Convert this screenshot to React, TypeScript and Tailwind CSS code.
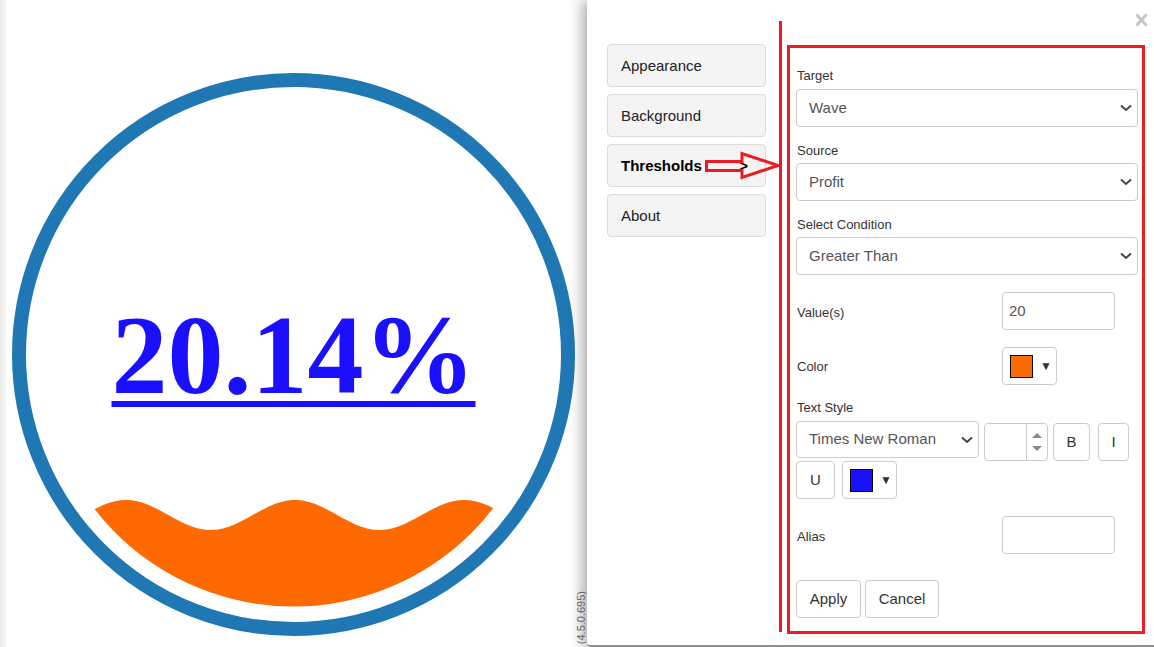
import React from 'react';

const RED = '#ed1c24';

const wavePath = (() => {
  let d = '';
  for (let x = -10; x <= 574; x += 2) {
    const y = 442 - 15 * Math.cos((2 * Math.PI * (x - 283)) / 169);
    d += `${x === -10 ? 'M' : 'L'} ${x} ${y.toFixed(2)} `;
  }
  return d + 'L 574 600 L -10 600 Z';
})();

const Gauge = () => (
  <svg width="563" height="563" viewBox="0 0 563 563" className="ml-[6px] mt-[73px] block">
    <defs>
      <clipPath id="inner">
        <circle cx="281.5" cy="281.5" r="252" />
      </clipPath>
    </defs>
    <circle cx="281.5" cy="281.5" r="274.5" fill="#fff" stroke="#1f77b4" strokeWidth="14" />
    <path d={wavePath} fill="#ff6a00" clipPath="url(#inner)" />
    <text
      x="281.5"
      y="320"
      textAnchor="middle"
      fontFamily="'Liberation Serif', 'Times New Roman', serif"
      fontWeight="bold"
      fontSize="112"
      fill="#1a10ff"
    >
      20.14%
    </text>
    <rect x="99.5" y="328" width="364" height="6" fill="#1a10ff" />
  </svg>
);

const Chevron = () => (
  <svg width="12" height="8" viewBox="0 0 12 8" className="shrink-0">
    <path d="M1 1.5 L6 6 L11 1.5" fill="none" stroke="#444" strokeWidth="2" />
  </svg>
);

const Select = ({ value, className = '' }: { value: string; className?: string }) => (
  <div
    className={`flex items-center justify-between rounded-[4px] border border-[#ccc] bg-white pl-[12px] pr-[5px] text-[15px] text-[#555] ${className}`}
  >
    <span>{value}</span>
    <Chevron />
  </div>
);

const Label = ({ children, className = '' }: { children: React.ReactNode; className?: string }) => (
  <div className={`pl-[1px] text-[13px] leading-[17px] text-[#333] ${className}`}>{children}</div>
);

const Swatch = ({ color }: { color: string }) => (
  <div className="flex h-[38px] w-[55px] items-center rounded-[4px] border border-[#ccc] bg-white pl-[7px]">
    <div className="h-[23px] w-[23px] border border-black" style={{ background: color }} />
    <span className="ml-[7px] text-[12px] leading-none text-[#333]">▼</span>
  </div>
);

const Btn = ({ children, className = '' }: { children: React.ReactNode; className?: string }) => (
  <div
    className={`flex h-[38px] items-center justify-center rounded-[4px] border border-[#ccc] bg-white text-[15px] text-[#333] ${className}`}
  >
    {children}
  </div>
);

const tabs = ['Appearance', 'Background', 'Thresholds', 'About'];

export default function App() {
  return (
    <div
      className="flex h-[647px] w-[1154px] overflow-hidden bg-white"
      style={{ fontFamily: "'Liberation Sans', Arial, sans-serif" }}
    >
      <div className="w-[6px] shrink-0 bg-gradient-to-r from-[#ebebeb] to-[#f7f7f7]" />
      <div className="w-[581px] shrink-0">
        <Gauge />
      </div>

      <div className="relative flex h-[647px] flex-1 rounded-bl-[4px] border-b-2 border-[#8f8f8f] bg-white pt-[21px] shadow-[-5px_0_14px_rgba(0,0,0,0.32)]">
        <svg width="13" height="14" viewBox="0 0 13 14" className="absolute right-[6px] top-[13px]">
          <path d="M1.5 1.5 L11.5 12.5 M11.5 1.5 L1.5 12.5" stroke="#c6c6c6" strokeWidth="3" />
        </svg>

        <div className="absolute bottom-[1px] left-[-11px] rotate-180 text-[11px] leading-[11px] text-[#666] [writing-mode:vertical-rl]">
          (4.5.0.695)
        </div>

        <div className="ml-[20px] mt-[23px] flex w-[159px] flex-col gap-[7px]">
          {tabs.map((t) => (
            <div
              key={t}
              className={`flex h-[43px] items-center justify-between rounded-[4px] border border-[#dcdcdc] bg-[#f4f4f4] pl-[13px] pr-[17px] pt-[2px] text-[15px] ${
                t === 'Thresholds' ? 'font-bold text-black' : 'text-[#222]'
              }`}
            >
              <span>{t}</span>
              {t === 'Thresholds' && <span>&gt;</span>}
            </div>
          ))}
        </div>

        <svg width="80" height="32" viewBox="0 0 80 32" className="absolute left-[116px] top-[150px]">
          <polygon
            points="3.5,11.5 39,11.5 39,3.5 75,15.5 39,27.5 39,20.5 3.5,20.5"
            fill="none"
            stroke={RED}
            strokeWidth="3"
          />
        </svg>

        <div className="ml-[13px] h-[611px] w-[3px] bg-[#ed1c24]" />

        <div className="ml-[5px] mt-[24px] flex h-[589px] w-[358px] flex-col border-[3px] border-[#ed1c24] pl-[6px] pr-[4px] pt-[19px]">
          <Label className="mb-[5px]">Target</Label>
          <Select value="Wave" className="h-[38px] w-[342px]" />
          <Label className="mb-[4px] mt-[15px]">Source</Label>
          <Select value="Profit" className="h-[38px] w-[342px]" />
          <Label className="mb-[4px] mt-[15px]">Select Condition</Label>
          <Select value="Greater Than" className="h-[38px] w-[342px]" />

          <div className="mt-[17px] grid grid-cols-[206px_113px] items-center">
            <Label className="pt-[2px]">Value(s)</Label>
            <div className="flex h-[38px] items-center rounded-[4px] border border-[#ccc] pl-[6px] text-[15px] text-[#555]">
              20
            </div>
          </div>

          <div className="mt-[17px] grid grid-cols-[206px_55px] items-center">
            <Label>Color</Label>
            <Swatch color="#ff6a00" />
          </div>

          <Label className="mb-[5px] mt-[14px]">Text Style</Label>
          <div className="flex flex-wrap items-start">
            <Select value="Times New Roman" className="h-[37px] w-[183px]" />
            <div className="ml-[5px] mt-[2px] flex h-[38px] w-[64px] rounded-[4px] border border-[#ccc] bg-white">
              <div className="flex-1" />
              <div className="flex w-[21px] flex-col items-center justify-center gap-[8px] border-l border-[#ccc]">
                <div className="h-0 w-0 border-x-[5px] border-b-[5px] border-x-transparent border-b-[#888]" />
                <div className="h-0 w-0 border-x-[5px] border-t-[5px] border-x-transparent border-t-[#888]" />
              </div>
            </div>
            <Btn className="ml-[5px] mt-[2px] w-[37px]">B</Btn>
            <Btn className="ml-[8px] mt-[2px] w-[31px]">I</Btn>
            <Btn className="w-[39px]">U</Btn>
            <div className="ml-[7px]">
              <Swatch color="#1a10ff" />
            </div>
          </div>

          <div className="mt-[17px] grid grid-cols-[206px_113px] items-center">
            <Label className="pt-[3px]">Alias</Label>
            <div className="h-[38px] rounded-[4px] border border-[#ccc]" />
          </div>

          <div className="mt-[26px] flex gap-[4px]">
            <Btn className="w-[65px]">Apply</Btn>
            <Btn className="w-[74px]">Cancel</Btn>
          </div>
        </div>
      </div>
    </div>
  );
}
